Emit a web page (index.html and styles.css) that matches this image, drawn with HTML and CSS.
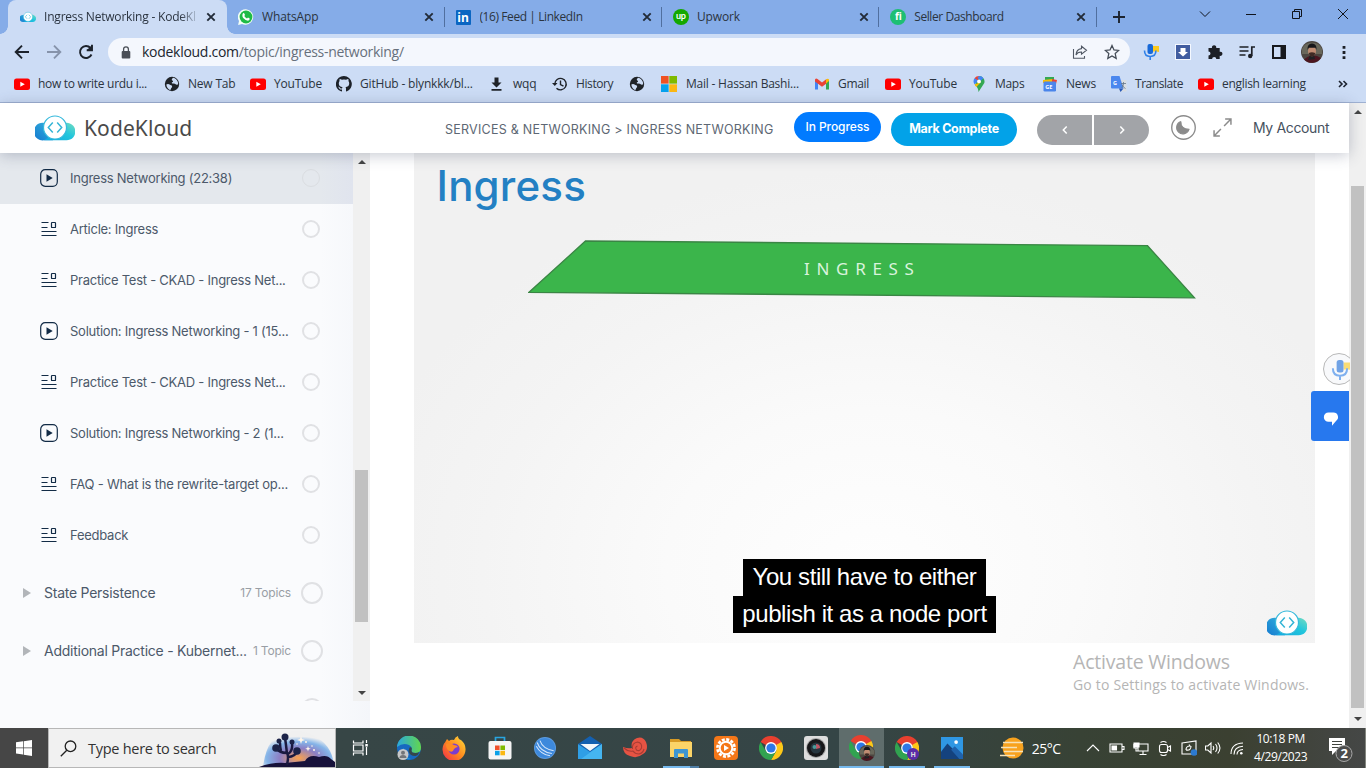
FILE: index.html
```html
<!DOCTYPE html>
<html lang="en">
<head>
<meta charset="utf-8">
<title>Ingress Networking - KodeKloud</title>
<link rel="stylesheet" href="styles.css">
</head>
<body>
<svg class="defs" width="0" height="0" aria-hidden="true">
  <defs>
    <linearGradient id="cloudL" x1="0" x2="1" y1="1" y2="0"><stop offset="0" stop-color="#1479d0"/><stop offset="1" stop-color="#35b4dc"/></linearGradient>
    <linearGradient id="cloudR" x1="0" x2="1" y1="1" y2="0"><stop offset="0" stop-color="#12a8e0"/><stop offset=".55" stop-color="#22c6dc"/><stop offset="1" stop-color="#74dcc0"/></linearGradient>
    <linearGradient id="edgeA" x1="0" x2="1"><stop offset="0" stop-color="#2aa8dc"/><stop offset="1" stop-color="#62d64e"/></linearGradient>
    <linearGradient id="foxA" x1="1" x2="0" y1="0" y2="1"><stop offset="0" stop-color="#ffe03c"/><stop offset=".5" stop-color="#ff8a1e"/><stop offset="1" stop-color="#f0264e"/></linearGradient>
    <radialGradient id="glow" cx=".5" cy=".75" r=".6"><stop offset="0" stop-color="#fba24e"/><stop offset=".45" stop-color="#8d7fc4"/><stop offset=".75" stop-color="#84b4e8"/><stop offset="1" stop-color="#f0f0f0"/></radialGradient>
  </defs>
  <symbol id="cloud" viewBox="0 0 40 26">
    <path d="M9 25.300A8.800 8.800 0 1 1 12 9l6 16.300z" fill="url(#cloudL)"/>
    <path d="M27 9a8.800 8.800 0 1 1 4 16.300H9l12-8z" fill="url(#cloudR)"/>
    <circle cx="20" cy="12.500" r="11.500" fill="#fff" stroke="#35b9dc" stroke-width="1.200"/>
    <path d="M17.800 7.500 13.300 12.500l4.500 5M22.200 7.500l4.500 5-4.500 5" fill="none" stroke="#35b5d6" stroke-width="1.500"/>
  </symbol>
  <symbol id="x" viewBox="0 0 10 10"><path d="M1.300 1.300l7.400 7.400M8.700 1.300 1.300 8.700" stroke="#222b38" stroke-width="1.900"/></symbol>
  <symbol id="yt" viewBox="0 0 16 16"><rect y="2.500" width="16" height="11.500" rx="2.500" fill="#f00"/><path d="M6.300 5.700v5l4.500-2.500z" fill="#fff"/></symbol>
  <symbol id="globe" viewBox="0 0 16 16"><circle cx="8" cy="8" r="7.200" fill="#1f2328"/><path d="M2.300 8.500q2-1 4 .5l1.500.5q1 1.500-.5 2.500l-1 2.200q-3.500-1.500-4-5.700M9 1.800q-2 1.500-1 2.500 1.500.5 1 1.500-2 .5-1 1.800 3-.5 4 1 1.500.3 2.200-.3-.2-4.500-4-6.200z" fill="#ccdcf5"/></symbol>
  <symbol id="chrome" viewBox="0 0 24 24"><path d="M12 12 1.600 6A12 12 0 0 1 22.400 6z" fill="#e8402f"/><path d="M22.400 6A12 12 0 0 1 12 24l5.200-9V6z" fill="#fdc818"/><path d="M1.600 6A12 12 0 0 0 12 24l5.200-9-10.400 0z" fill="#31a350"/><path d="M10 6h12.400L17 9z" fill="#e8402f"/><circle cx="12" cy="12" r="5.900" fill="#fff"/><circle cx="12" cy="12" r="4.600" fill="#2f78e6"/></symbol>
  <symbol id="face" viewBox="0 0 22 22"><circle cx="11" cy="11" r="11" fill="#4c4640"/><path d="M1 8a11 11 0 0 1 20 0v5H1z" fill="#68675a"/><path d="M3 18.500q8-7 17-1.500a11 11 0 0 1-17 1.500" fill="#4c1620"/><path d="M7 19l2-5h4l1 4z" fill="#202124"/><ellipse cx="11" cy="10" rx="4" ry="5.300" fill="#c08c72"/><path d="M6.500 9Q6 2.500 11 2.500T15.500 9L14.500 6.800H7.800z" fill="#17171a"/><path d="M7.800 12q3-1.500 6.400 0-.5 3.500-3.200 3.500T7.800 12" fill="#3f2a24"/></symbol>
  <symbol id="play" viewBox="0 0 18 18"><rect x=".7" y=".7" width="16.600" height="16.600" rx="4.500" fill="none" stroke="#122b46" stroke-width="1.200"/><path d="M6.500 5.200v7.600l6.200-3.800z" fill="#122b46"/></symbol>
  <symbol id="list" viewBox="0 0 18 18"><path d="M1.500 2.500h7M1.500 7.500h6M1.500 11.500h15M1.500 15.500h15" stroke="#122b46" stroke-width="1.200"/><rect x="11.500" y="2.500" width="4" height="5" rx=".6" fill="none" stroke="#122b46" stroke-width="1.200"/></symbol>
  <symbol id="mic" viewBox="0 0 16 16"><path d="M10 2h6v6l-2.500-.5H10z" fill="#fbc91c"/><rect x="4.500" y="0" width="5.500" height="10" rx="2" fill="#1769d8"/><path d="M1.500 6.500q0 6 5.700 6t5.700-6M7.200 12.500V16" fill="none" stroke="#2f80e8" stroke-width="1.600"/></symbol>
</svg>

<div class="browser">
  <div class="tabs">
    <div class="tab active"><svg class="fav"><use href="#cloud"/></svg><span class="t fade">Ingress Networking - KodeKl</span><svg class="close"><use href="#x"/></svg></div>
    <div class="tab"><svg class="fav" viewBox="0 0 16 16"><path d="M8 .2A7.800 7.800 0 1 1 4 15L.1 15.900 1 12A7.800 7.800 0 0 1 8 .2" fill="#f3fff5"/><circle cx="8" cy="8" r="6.400" fill="#1fbb46"/><path d="M5 4.200q1-.8 1.600.8l.4 1-.7 1q1 1.800 2.700 2.500l1-.9 1.700.9q.2 2-1.700 2.300-2.500-.2-4.500-2.500T5 4.200" fill="#fff"/></svg><span class="t">WhatsApp</span><svg class="close"><use href="#x"/></svg><i class="sep"></i></div>
    <div class="tab"><span class="fav li">in</span><span class="t tight">(16) Feed | LinkedIn</span><svg class="close"><use href="#x"/></svg><i class="sep"></i></div>
    <div class="tab"><span class="fav up">up</span><span class="t">Upwork</span><svg class="close"><use href="#x"/></svg><i class="sep"></i></div>
    <div class="tab"><span class="fav fi">fi</span><span class="t sell">Seller Dashboard</span><svg class="close"><use href="#x"/></svg><i class="sep"></i></div>
    <svg class="plus" viewBox="0 0 12 12"><path d="M6 0v12M0 6h12" stroke="#1d2430" stroke-width="1.900"/></svg>
    <div class="winctl">
      <svg viewBox="0 0 12 12"><path d="M1 3.500l5 5 5-5" /></svg>
      <svg viewBox="0 0 12 12"><path d="M1 6.500h10"/></svg>
      <svg viewBox="0 0 12 12"><path d="M1.500 3.500h7v7h-7zM3.500 3.500v-2h7v7h-2"/></svg>
      <svg viewBox="0 0 12 12"><path d="M1 1l10 10M11 1 1 11"/></svg>
    </div>
  </div>
  <div class="toolbar">
    <svg class="nav" viewBox="0 0 16 16"><path d="M15 8H2M8 1.700 1.700 8 8 14.300" stroke="#1c222b"/></svg>
    <svg class="nav" viewBox="0 0 16 16"><path d="M1 8h13M8 1.700 14.300 8 8 14.300" stroke="#8693aa"/></svg>
    <svg class="nav" viewBox="0 0 16 16"><path d="M13.500 10.500A6 6 0 1 1 12.500 4M14 .8v5.400H8.700" stroke="#1c222b"/><path d="M14 1v5H9z" fill="#1c222b"/></svg>
    <div class="omni">
      <svg class="lock" viewBox="0 0 10 13"><rect x=".7" y="5" width="8.600" height="7.500" rx="1" fill="#4a4f57"/><path d="M2.600 5V3.300a2.400 2.400 0 0 1 4.800 0V5" fill="none" stroke="#4a4f57" stroke-width="1.300"/></svg>
      <span class="url"><b>kodekloud.com</b>/topic/ingress-networking/</span>
      <svg class="share" viewBox="0 0 16 16"><path d="M1.500 5v9.300h11V12M9.500 2.200l5 4-5 4V8q-4-.2-5.500 3 .3-5.800 5.500-6.400z" fill="none" stroke="#505864" stroke-width="1.100"/></svg>
      <svg class="star" viewBox="0 0 16 16"><path d="M8 1.500l2 4.400 4.700.5-3.500 3.200 1 4.800L8 12l-4.200 2.400 1-4.800L1.300 6.400 6 5.900z" fill="none" stroke="#454d58" stroke-width="1.300"/></svg>
    </div>
    <div class="ext">
      <svg viewBox="0 0 16 16"><use href="#mic"/></svg>
      <svg viewBox="0 0 16 16"><rect x=".5" y=".5" width="15" height="15" fill="#415da0" stroke="#f4f8ff"/><path d="M5.500 4h5v4H13l-5 4.500L3 8h2.500z" fill="#fff"/></svg>
      <svg viewBox="0 0 16 16"><path d="M1.500 4H5a2.200 2.200 0 1 1 4.200 0h3.500v3.800a2.100 2.100 0 1 1 0 4V15H9.300a2.100 2.100 0 0 0-4.200 0H1.500v-3.500a2 2 0 0 0 0-4z" fill="#1d2026"/></svg>
      <svg viewBox="0 0 16 16"><path d="M.5 3h9M.5 7h9M.5 11h6M12.800 12V3H16" fill="none" stroke="#1d2026" stroke-width="1.700"/><circle cx="11.200" cy="12" r="2.200" fill="#1d2026"/></svg>
      <svg viewBox="0 0 16 16"><path d="M1 1h14v14H1z" fill="#17191d"/><path d="M3 3h6.500v10H3z" fill="#ccdcf5"/></svg>
      <svg class="avatar"><use href="#face"/></svg>
      <svg class="dots" viewBox="0 0 4 16"><path d="M.5 1h3v3h-3zM.5 6.500h3v3h-3zM.5 12h3v3h-3z" fill="#1d2026"/></svg>
    </div>
  </div>
  <div class="bookmarks">
    <a class="bm w150"><svg><use href="#yt"/></svg>how to write urdu i...</a>
    <a class="bm w86"><svg><use href="#globe"/></svg>New Tab</a>
    <a class="bm w86"><svg><use href="#yt"/></svg>YouTube</a>
    <a class="bm w153"><svg viewBox="0 0 16 16"><path d="M8 0a8 8 0 0 0-2.600 15.600c.4 0 .6-.2.600-.5v-1.600c-2.200.4-2.700-.9-2.900-1.300-.6-1-.2-.8-.9-1.300 1.300-.3 1.800 1.300 2.500 1.500.6.200 1 0 1.400-.2 0-.5.300-.9.500-1.100-2-.3-3.800-1-3.800-3.900 0-.9.300-1.600.8-2.200-.2-.6-.2-1.300.1-2.100.8 0 1.500.4 2.200.9a8 8 0 0 1 4.200 0c.7-.5 1.400-.9 2.200-.9.300.8.300 1.500.1 2.100.5.600.8 1.300.8 2.200 0 2.900-1.800 3.600-3.800 3.900.4.300.6.800.6 1.600V15c0 .3.200.6.600.5A8 8 0 0 0 8 0" fill="#1c2129"/></svg>GitHub - blynkkk/bl...</a>
    <a class="bm w63"><svg viewBox="0 0 16 16"><path d="M5.500 1.500h4v5h3l-5 5-5-5h3zM2.500 13h10v1.800h-10z" fill="#1f2328"/></svg>wqq</a>
    <a class="bm w77"><svg viewBox="0 0 16 16"><path d="M2.800 8A5.700 5.700 0 1 1 4.500 12.200M8.500 4.500v4l3 1.700" fill="none" stroke="#1f2328" stroke-width="1.400"/><path d="M0 7h5.500L2.800 10z" fill="#1f2328"/></svg>History</a>
    <a class="bm w32"><svg><use href="#globe"/></svg></a>
    <a class="bm w152"><svg viewBox="0 0 16 16"><path d="M0 0h7.600v7.600H0z" fill="#f05223"/><path d="M8.300 0H16v7.600H8.300z" fill="#7fba00"/><path d="M0 8.300h7.600V16H0z" fill="#06a2ee"/><path d="M8.300 8.300H16V16H8.300z" fill="#fcb813"/></svg>Mail - Hassan Bashi...</a>
    <a class="bm w71"><svg viewBox="0 0 16 16"><path d="M1 13.500V4l3 2.500v7z" fill="#4285f4"/><path d="M12 13.500v-7L15 4v9.500z" fill="#34a853"/><path d="M1 5V3.500q1-1.700 2.500-.5L8 6.500 12.500 3v4.500L8 10.800 1 5.500" fill="#ea4335"/><path d="M12 7.500v-4Q14 1.800 15 3.500V5z" fill="#fbbc04"/></svg>Gmail</a>
    <a class="bm w86"><svg><use href="#yt"/></svg>YouTube</a>
    <a class="bm w71"><svg viewBox="0 0 16 16"><path d="M8 0a5.500 5.500 0 0 1 5.300 7L7.500 16Q7.500 12 4 9z" fill="#34a853"/><path d="M8 0a5.500 5.500 0 0 0-4.500 2.300L7 6z" fill="#ea4335"/><path d="M3.500 2.300Q1.500 5 3.500 8.500l4-4z" fill="#4285f4"/><path d="M3.500 8.500l1.800 2.600L10 6z" fill="#fbbc04"/><path d="M8 0q3 0 4.500 2.300L9.500 5 6.500 2z" fill="#4285f4"/><circle cx="8" cy="5.400" r="1.900" fill="#fff"/></svg>Maps</a>
    <a class="bm w69"><svg viewBox="0 0 16 16"><path d="M3 1h9v6H3z" fill="#34a853"/><path d="M1 4l10-1v4H1z" fill="#fbbc04"/><path d="M10 3l5 1-1 4h-4z" fill="#ea4335"/><rect x="1.500" y="5.500" width="12.500" height="10" rx="1.300" fill="#4b86ec"/><text x="3.200" y="13" class="g">GE</text></svg>News</a>
    <a class="bm w87"><svg viewBox="0 0 16 16"><path d="M6 4h9.500v11.500H9z" fill="#d9dde2"/><path d="M1 0h7.500l4 12.500H1Q0 12.500 0 11.500V1q0-1 1-1" fill="#4a87ee"/><path d="M8 12.500h4.500L9.500 16z" fill="#2859b8"/><text x="2" y="8.500" class="g">G</text><path d="M10 7.500h5M12.500 6v2q-.5 3-2 4M11 8.500q1 3 3.500 4" fill="none" stroke="#637689" stroke-width=".8"/></svg>Translate</a>
    <a class="bm w140"><svg><use href="#yt"/></svg>english learning</a>
    <svg class="more" viewBox="0 0 10 8"><path d="M1 1l3 3-3 3M5.500 1l3 3-3 3" fill="none" stroke="#1d2430" stroke-width="1.600"/></svg>
  </div>
</div>

<div class="page">
  <div class="view">
    <header class="head">
      <svg class="logo"><use href="#cloud"/></svg><span class="brand">KodeKloud</span>
      <span class="crumb">SERVICES &amp; NETWORKING &gt; INGRESS NETWORKING</span>
      <span class="status">In Progress</span>
      <span class="mark">Mark Complete</span>
      <div class="pager">
        <span><svg viewBox="0 0 6 8"><path d="M4.700 .5 1.300 4l3.400 3.500"/></svg></span>
        <span><svg viewBox="0 0 6 8"><path d="M1.300 .5l3.400 3.500-3.400 3.500"/></svg></span>
      </div>
      <svg class="moon" viewBox="0 0 24 24"><circle cx="12" cy="12" r="11.300" fill="none" stroke="#8b8b8b" stroke-width="1.300"/><path d="M9.500 6.200q-.4 7 7.800 7.600A6.100 6.100 0 1 1 9.500 6.200" fill="#8b8b8b" stroke="#8b8b8b"/></svg>
      <svg class="expand" viewBox="0 0 18 18"><path d="M10.500 7.500 17 1M11.500 1H17v5.500M7.500 10.500 1 17M1 11.500V17h5.500" fill="none" stroke="#8b8b8b" stroke-width="1.400"/></svg>
      <span class="acct">My Account</span>
    </header>
    <div class="cols">
      <aside class="side">
        <div class="scroll">
          <div class="list">
            <div class="it on"><svg><use href="#play"/></svg><span>Ingress Networking (22:38)</span><i></i></div>
            <div class="it"><svg><use href="#list"/></svg><span>Article: Ingress</span><i></i></div>
            <div class="it"><svg><use href="#list"/></svg><span>Practice Test - CKAD - Ingress Net...</span><i></i></div>
            <div class="it"><svg><use href="#play"/></svg><span>Solution: Ingress Networking - 1 (15...</span><i></i></div>
            <div class="it"><svg><use href="#list"/></svg><span>Practice Test - CKAD - Ingress Net...</span><i></i></div>
            <div class="it"><svg><use href="#play"/></svg><span>Solution: Ingress Networking - 2 (1...</span><i></i></div>
            <div class="it wide"><svg><use href="#list"/></svg><span>FAQ - What is the rewrite-target op...</span><i></i></div>
            <div class="it"><svg><use href="#list"/></svg><span>Feedback</span><i></i></div>
            <div class="sec first"><b></b><span>State Persistence</span><em>17 Topics</em><i></i></div>
            <div class="sec"><b></b><span>Additional Practice - Kubernet...</span><em>1 Topic</em><i></i></div>
            <div class="sec"><span></span><i></i></div>
          </div>
          <div class="bar sbar"><b class="a up-a"></b><div class="thumb"></div><b class="a dn-a"></b></div>
        </div>
      </aside>
      <main class="main">
        <div class="video">
          <div class="vt">Ingress</div>
          <div class="banner">
            <svg viewBox="0 0 668 60"><path d="M57.500 2 619.500 6.700 666.500 58.800 1 53.300z" fill="#3bb54b" stroke="#3a8544" stroke-width="1.300"/></svg>
            <span>INGRESS</span>
          </div>
          <div class="cap"><span class="c1">You still have to either</span><span class="c2">publish it as a node port</span></div>
          <svg class="wm"><use href="#cloud"/></svg>
        </div>
        <div class="activate"><p class="a1">Activate Windows</p><p class="a2">Go to Settings to activate Windows.</p></div>
      </main>
    </div>
    <div class="micfab"><svg><use href="#mic"/></svg></div>
    <div class="chat"><svg viewBox="0 0 16 14"><path d="M5.500 .5h5a4.600 4.600 0 0 1 2.500 8.400Q11.500 10.500 9 13.800V9.800H5.500a4.600 4.600 0 0 1 0-9.300" fill="#fff"/></svg></div>
  </div>
  <div class="bar pbar"><b class="a up-a"></b><div class="thumb"></div><b class="a dn-a"></b></div>
</div>

<footer class="task">
  <div class="start"><svg viewBox="0 0 16 16"><path d="M0 2.300 7 1.300v6.300H0zM7.700 1.200 16 0v7.600H7.700zM0 8.300h7v6.300l-7-1zM7.700 8.300H16V16l-8.300-1.200z" fill="#fff"/></svg></div>
  <div class="search">
    <svg class="mag" viewBox="0 0 17 17"><circle cx="10.500" cy="6.300" r="5.300" fill="none" stroke="#222" stroke-width="1.300"/><path d="M6.800 10.200.8 16.200" stroke="#222" stroke-width="1.300"/></svg>
    <span>Type here to search</span>
    <svg class="art" viewBox="0 0 76 38"><path d="M4 38Q8 6 28 3q14-3 26 3 20 10 21 32z" fill="url(#glow)"/><path d="M0 38q14-5 26-4 10-1 20-2 4-7 14-4 8-3 12 2l4 3v5z" fill="#17123a"/><path d="M28 36q2-9 0-12-8 0-12-6M28 25q-1-10-2-16M29 25q5-3 4-11M29 28q7 0 10-7M22 22q-1-4-1-8" fill="none" stroke="#1b1a40" stroke-width="2.500"/><g fill="#1c2348"><circle cx="26" cy="8" r="3.500"/><circle cx="17" cy="19" r="3.800"/><circle cx="38" cy="22" r="3.800"/><circle cx="33" cy="13" r="2.500"/><circle cx="20" cy="12" r="2.500"/></g><g fill="#fff6ea"><path d="M42 7l1 3 3 1-3 1-1 3-1-3-3-1 3-1zM49 17l.7 2 2 .7-2 .7-.7 2-.7-2-2-.7 2-.7z"/><circle cx="47" cy="13" r="1"/><circle cx="55" cy="21" r="1"/><circle cx="53" cy="17" r=".8"/><circle cx="60" cy="24" r=".8"/><circle cx="38" cy="15" r=".8"/></g></svg>
  </div>
  <div class="tv"><svg viewBox="0 0 18 18"><path d="M1.500 1.500V4H11V1.500M1.500 6h9.500v6H1.500zM1.500 16.500V14H11v2.500M14.500 1v3M14.500 8v8" fill="none" stroke="#fff" stroke-width="1.200"/><path d="M13.300 5h2.500v2.500h-2.500z" fill="#fff"/></svg></div>
  <div class="apps">
    <div><svg viewBox="0 0 24 24"><circle cx="12" cy="12" r="12" fill="#1769c0"/><path d="M0 11A12 12 0 0 1 24 12q0 5-6 5-4 0-3.500-2.500Q16 11 12 9 6 6 0 11" fill="url(#edgeA)"/><path d="M12.500 11.500q3-1 2 3 0 2.500 4 2.500 2 0 4-1-1 3-4 4-6 0-7-5z" fill="#35474a"/><path d="M7 12q-1 9 7 11-7 1-10-4 0-5 3-7" fill="#1d9bdc"/><circle cx="6" cy="18.500" r="5.500" fill="#c6c7c8"/><circle cx="6" cy="16.800" r="2" fill="#737578"/><path d="M2.500 22q0-3 3.500-3t3.500 3z" fill="#737578"/></svg></div>
    <div><svg viewBox="0 0 24 24"><path d="M5 3l2 2q2-2 5-1 1-3 4-4 0 3 3 4 5 4 4.500 10A11.500 11.500 0 0 1 .5 13Q1 8 3 6.500z" fill="url(#foxA)"/><circle cx="12" cy="13" r="5.600" fill="#7a3cd0"/><path d="M4 8q4-2 8 1 3 0 4 2-2 0-4 2-1 4-5 2-3-2-3-7" fill="#ff8b24"/></svg></div>
    <div><svg viewBox="0 0 24 24"><path d="M7.500 6V1.500h9V6" fill="none" stroke="#28a5e0" stroke-width="1.700"/><rect x=".5" y="5" width="23" height="18.500" rx="2" fill="#f5f5f5"/><path d="M7 9.500h4.600V14H7z" fill="#f0502a"/><path d="M12.400 9.500H17V14h-4.600z" fill="#7fba00"/><path d="M7 14.800h4.600v4.500H7z" fill="#0aa1e8"/><path d="M12.400 14.800H17v4.500h-4.600z" fill="#fbb813"/></svg></div>
    <div><svg class="s22" viewBox="0 0 24 24"><circle cx="12" cy="12" r="12" fill="#5b9be0"/><circle cx="12" cy="12" r="11" fill="#3d89dc"/><path d="M3.500 6q3 10 16 12M6.500 4q3 9 15 11M2.500 10q5 9 15 10.500" fill="none" stroke="#d4e6fb" stroke-width="1.100"/></svg></div>
    <div><svg viewBox="0 0 24 24"><path d="M0 8 12 0l12 8-12 9z" fill="#1460b0"/><path d="M0 8l12 8 12-8v15H0z" fill="#2f9fe6"/><path d="M2.500 8h19L12 15z" fill="#f4f7fa"/><path d="M24 8v15H3z" fill="#45b5f0"/></svg></div>
    <div><svg viewBox="0 0 24 24"><path d="M0 11q5 2 9 1-2-7 5-10 6-2 9 4 3 8-3 12-6 5-13 2Q0 18 0 11" fill="#e65343"/><path d="M9.500 13q-1-6 5-7 5 1 4 6-2 4-5 2-2-3 1-4M1 12q4 4 9 3 2 3 6 3 4-1 5-5" fill="none" stroke="#a83c34" stroke-width="1.100"/></svg></div>
    <div class="run fold"><svg viewBox="0 0 24 24"><path d="M1 3h9l2 2h10v15H1z" fill="#d89b25"/><path d="M1 6h22v15H1z" fill="#fbd468"/><path d="M5 22v-8q0-1 1-1h12q1 0 1 1v8h-4v-4.500H9V22z" fill="#3e96d2"/></svg></div>
    <div><svg viewBox="0 0 24 24"><rect width="24" height="24" rx="4" fill="#f57718"/><circle cx="12" cy="12" r="8.600" fill="none" stroke="#fff" stroke-width="2.600" stroke-dasharray="3 1.500"/><circle cx="12" cy="12" r="6.300" fill="none" stroke="#fff" stroke-width="2"/><path d="M10 9v6l5-3z" fill="#fff"/></svg></div>
    <div><svg><use href="#chrome"/></svg></div>
    <div><svg viewBox="0 0 24 24"><rect width="24" height="24" rx="3" fill="#dedede"/><circle cx="12" cy="12" r="10" fill="#a7a7a7"/><circle cx="12" cy="12" r="9" fill="#161719"/><circle cx="12" cy="12" r="5.500" fill="#26353e"/><path d="M12 8a4 4 0 0 1 4 4l-4 1z" fill="#c25563"/><circle cx="10.500" cy="11" r="2" fill="#4a9a9a"/></svg></div>
    <div class="run cur"><svg viewBox="0 0 26 26"><use href="#chrome" width="24" height="24"/><use href="#face" x="10" y="10" width="16" height="16"/></svg></div>
    <div class="run"><svg viewBox="0 0 24 24"><use href="#chrome" width="24" height="24"/><circle cx="18" cy="18" r="6" fill="#5a2ca8"/><text x="15.400" y="21" class="hh">H</text></svg></div>
    <div class="run"><svg class="s22" viewBox="0 0 24 24"><path d="M0 0h24v24H0z" fill="#2f97e4"/><path d="M0 16 7 7l17 17H0z" fill="#14427e"/><path d="M11 14l4-4 9 9v5h-4z" fill="#1f62ac"/><circle cx="16.500" cy="5.500" r="2" fill="#fff"/></svg></div>
  </div>
  <div class="tray">
    <svg class="wx" viewBox="0 0 24 22"><circle cx="13" cy="11" r="10.500" fill="#f8a21e"/><path d="M3 5.500h20M1 10.500h16M4 14.500h19M0 18.500h15" stroke="#f6e2b8" stroke-width="1.700"/></svg>
    <span class="temp">25°C</span>
    <svg viewBox="0 0 16 16"><path d="M2 11l6-6 6 6"/></svg>
    <svg viewBox="0 0 16 16"><path d="M1 4h12v8H1zM13.500 6.500h1.500v3h-1.500"/><path d="M3 6h4.500v4H3z" fill="#fff"/></svg>
    <svg viewBox="0 0 16 16"><path d="M5 4h10v7H5zM10 11v3M6.500 14.500h7M1 4.500h4v3.500H1zM3 8v3h2"/><path d="M1 3h5v4H1z" fill="#fff"/></svg>
    <svg viewBox="0 0 16 16"><rect x="2.500" y="4.500" width="8" height="8" rx="2"/><path d="M10.500 7.500l3-1.500v5l-3-1.500M3.500 2.500q3-2 6 0M3.500 14.500q3 2 6 0"/></svg>
    <svg viewBox="0 0 16 16"><path d="M1 3l14-2v13H1zM5 10q0-4 4-4l-1-1.500M10 6q0 5-5 4"/><circle cx="13" cy="12.500" r="3.300" fill="#2c7ad0" stroke="none"/></svg>
    <svg viewBox="0 0 16 16"><path d="M.5 6h2.300L6 3v10L2.800 10H.5zM8 6q1.500 2 0 4M10.500 4q3 4 0 8M12.700 2.500q4.500 5.500 0 11"/></svg>
    <svg viewBox="0 0 16 16"><path d="M2 14Q2 3.500 14 3M5 14.500Q5 7 14 6.300M8 14.500Q8 10 14 9.500"/><circle cx="12.300" cy="13.200" r="1.300" fill="#fff" stroke="none"/></svg>
    <div class="clock"><span>10:18 PM</span><span>4/29/2023</span></div>
    <svg class="note" viewBox="0 0 26 26"><path d="M1 2h16v13H8l-4 4v-4H1z" fill="#fff" stroke="none"/><path d="M4 5.500h10M4 8.500h10M4 11.500h7" stroke="#40443e"/><circle cx="16" cy="17.500" r="8" fill="#4b4c4b" stroke="#a8a8a8" stroke-width="1"/><text x="12.500" y="22" class="two">2</text></svg>
    <i class="peek"></i>
  </div>
</footer>
</body>
</html>
```
FILE: styles.css
```css
* { box-sizing: border-box; }
body { margin: 0; width: 1366px; height: 768px; overflow: hidden; font-family: "Open Sans", "Noto Sans", sans-serif; background: #fff; display: flex; flex-direction: column; }
svg { flex: none; display: block; }
i, em, b { font-style: normal; font-weight: 400; }
.defs { position: absolute; }

/* browser chrome */
.browser { height: 103px; flex: none; background: #ccdcf5; border-bottom: 1px solid #9fb1d2; font-size: 12px; color: #2b3440; }
.tabs { height: 34px; background: #85ace8; display: flex; padding-left: 8px; }
.tab { width: 217.400px; flex: none; display: flex; align-items: center; padding: 0 0 0 12px; position: relative; letter-spacing: -.12px; }
.tab.active { background: #ccdcf5; border-radius: 8px 8px 0 0; width: 219px; margin-right: -.900px; }
.tab.active::before, .tab.active::after { content: ""; position: absolute; bottom: 0; width: 8px; height: 8px; }
.tab.active::before { left: -8px; background: radial-gradient(circle at 0 0, #85ace8 7.500px, #ccdcf5 8px); }
.tab.active::after { right: -8px; background: radial-gradient(circle at 100% 0, #85ace8 7.500px, #ccdcf5 8px); }
.fav { width: 16px; height: 16px; margin-right: 8px; flex: none; }
.li { background: #0b66c2; color: #fff; font: 700 12px/15px "Open Sans", sans-serif; text-align: center; border-radius: 1px; height: 15px; width: 15px; margin-right: 9px; }
.up { background: #14a800; color: #fff; font: 700 9px/13px Lato, sans-serif; text-align: center; border-radius: 50%; }
.fi { background: #1dbf73; color: #fff; font: 700 10px/15px "Open Sans", sans-serif; text-align: center; border-radius: 50%; }
.t { width: 162px; white-space: nowrap; overflow: hidden; line-height: 18px; }
.tight { letter-spacing: -.42px; }
.sell { letter-spacing: -.2px; }
.fade { width: 156px; margin-right: 6px; letter-spacing: -.2px; -webkit-mask-image: linear-gradient(90deg, #000 136px, transparent 156px); mask-image: linear-gradient(90deg, #000 136px, transparent 156px); }
.sell { letter-spacing: -.42px; }
.close { width: 10px; height: 10px; }
.sep { position: absolute; right: -1px; top: 7px; width: 1px; height: 20px; background: #506f9f; }
.plus { width: 12px; height: 12px; margin: 11px 0 0 17.500px; }
.winctl { display: flex; gap: 34px; margin-left: auto; padding: 8px 17px 0 0; }
.winctl svg { width: 12px; height: 12px; fill: none; stroke: #10141c; stroke-width: 1; }
.toolbar { height: 36px; display: flex; align-items: center; padding-left: 14px; }
.nav { width: 16px; height: 16px; margin-right: 16px; fill: none; stroke-width: 1.900; }
.omni { width: 1022px; height: 28px; margin-left: -2px; border-radius: 14px; background: #f4f7fd; display: flex; align-items: center; padding: 0 10px 0 13px; }
.lock { width: 10px; height: 13px; }
.url { font-size: 14px; letter-spacing: -.28px; color: #67707c; margin-left: 11px; flex: 1; line-height: 20px; }
.url b { color: #20262f; }
.share { width: 16px; height: 16px; margin-right: 16px; }
.star { width: 16px; height: 16px; }
.ext { display: flex; align-items: center; padding-left: 13px; gap: 16px; }
.ext svg { width: 16px; height: 16px; }
.ext .avatar { width: 22px; height: 22px; margin-left: -2px; }
.ext .dots { width: 4px; margin-left: 3px; height: 15px; }
.bookmarks { height: 32px; display: flex; align-items: center; padding: 0 0 4px 14px; letter-spacing: -.22px; }
.bm { display: flex; align-items: center; gap: 8px; white-space: nowrap; flex: none; line-height: 18px; }
.bm svg { width: 16px; height: 16px; }
.w150 { width: 150px; letter-spacing: -.3px; } .w86 { width: 86px; letter-spacing: -.2px; } .w153 { width: 153px; letter-spacing: -.18px; } .w63 { width: 63px; } .w77 { width: 77px; letter-spacing: -.4px; } .w32 { width: 32px; }
.w152 { width: 153px; gap: 9px; } .w71 { width: 71px; letter-spacing: -.3px; } .w69 { width: 69px; } .w87 { width: 87px; letter-spacing: -.45px; } .w140 { width: 140px; letter-spacing: -.3px; }
.more { width: 10px; height: 8px; }
.g { font: 700 5.500px "Open Sans", sans-serif; fill: #fff; letter-spacing: 0; }

/* page */
.page { height: 625px; flex: none; display: flex; }
.view { width: 1349px; position: relative; display: flex; flex-direction: column; }
.head { height: 50px; flex: none; background: #fff; display: flex; align-items: center; box-shadow: 0 2px 14px rgba(60, 70, 100, .3); position: relative; z-index: 2; font-family: Inter, sans-serif; padding-left: 35px; }
.head > * { flex: none; }
.logo { width: 40px; height: 26px; }
.brand { width: 370px; padding-left: 9px; font: 400 21px/28px "Noto Sans", sans-serif; letter-spacing: .1px; color: #4a4a4a; }
.crumb { width: 349px; font-size: 12.500px; letter-spacing: .24px; color: #5d6773; padding-top: 3px; white-space: nowrap; }
.status { width: 87px; height: 30px; border-radius: 15px; background: #017bff; color: #fff; font-size: 12px; font-weight: 500; line-height: 30px; text-align: center; margin-bottom: 3px; letter-spacing: -.1px; }
.mark { width: 126px; height: 33px; margin: 2px 0 0 10px; border-radius: 17px; background: #02a2e8; color: #fff; font-size: 12.500px; font-weight: 700; line-height: 32px; text-align: center; letter-spacing: -.28px; }
.pager { display: flex; gap: 2px; margin: 4px 0 0 20px; }
.pager span { width: 55px; height: 30px; background: #a2a4a8; display: flex; align-items: center; justify-content: center; }
.pager span:first-child { border-radius: 15px 0 0 15px; }
.pager span:last-child { border-radius: 0 15px 15px 0; }
.pager svg { width: 6px; height: 8px; fill: none; stroke: #fff; stroke-width: 1.500; }
.moon { width: 25px; height: 25px; margin: 0 17px 2px 22px; }
.expand { width: 19px; height: 19px; margin-right: 21px; margin-bottom: 1px; }
.acct { font-size: 14px; letter-spacing: -.36px; color: #46515e; white-space: nowrap; margin-top: -1px; }
.cols { flex: 1; display: flex; height: 575px; }
.side { width: 370px; flex: none; background: linear-gradient(90deg, #fafbfd 320px, #f4f6fa 370px); }
.scroll { height: 548px; display: flex; overflow: hidden; }
.list { width: 353px; font-family: Inter, sans-serif; color: #4c596a; }
.it { height: 51px; display: flex; align-items: center; padding: 0 33px 0 40px; font-size: 13px; letter-spacing: -.25px; }
.it.wide { letter-spacing: -.21px; }
.it.on { background: linear-gradient(90deg, #e4e8ed 320px, #e0e4ee); }
.it svg { width: 18px; height: 18px; margin: -1px 12px 0 0; }
.it span { width: 231px; white-space: nowrap; padding-bottom: 2px; }
.it i, .sec i { width: 18px; height: 18px; border: 2px solid #e0e1e4; border-radius: 50%; flex: none; margin: -1px 0 0 1px; }
.it.on i { border-color: #dadde1; border-width: 1px; }
.sec { height: 58px; display: flex; align-items: center; padding: 0 30px 0 23px; font-size: 14px; letter-spacing: -.25px; }
.sec.first { margin-top: 3px; }
.sec b { border-left: 8px solid #b2b5b9; border-top: 5px solid transparent; border-bottom: 5px solid transparent; margin-right: 13px; }
.sec span { flex: 1; white-space: nowrap; padding-bottom: 1px; }
.sec em { font-size: 12px; color: #999ea5; margin-right: 9px; letter-spacing: -.2px; white-space: nowrap; padding-bottom: 2px; }
.sec i { width: 22px; height: 22px; margin-top: 0; }
.bar { width: 17px; background: #f0f0f0; display: flex; flex-direction: column; align-items: center; }
.thumb { width: 13px; background: #c1c1c1; }
.a { width: 0; height: 0; border-left: 4px solid transparent; border-right: 4px solid transparent; }
.up-a { border-bottom: 4px solid #444; }
.dn-a { border-top: 4px solid #444; }
.sbar .up-a { margin-top: 7px; }
.sbar .thumb { height: 152px; margin-top: 306px; }
.sbar .dn-a { margin-top: 69px; }
.pbar .up-a { margin-top: 7px; }
.pbar .thumb { height: 522px; margin-top: 72px; }
.pbar .dn-a { margin-top: 9px; }
.main { flex: 1; background: #fff; }
.video { width: 901px; height: 490px; margin-left: 44px; position: relative; background: radial-gradient(ellipse 520px 400px at 51% 85%, #fefefe 0, #fafafa 40%, #f4f4f4 75%, #f1f1f1 100%); }
.vt { padding: 8px 0 0 22.500px; height: 86px; font: 500 42px/50px Inter, sans-serif; letter-spacing: .2px; color: #2380c3; }
.banner { width: 668px; height: 60px; margin-left: 114px; display: grid; }
.banner svg, .banner span { grid-area: 1 / 1; }
.banner svg { width: 668px; height: 60px; }
.banner span { font: 400 17px/60px "Noto Sans", sans-serif; letter-spacing: 6.700px; color: #d9f3dc; padding-left: 276px; }
.cap { margin-top: 260px; display: flex; flex-direction: column; align-items: center; font: 24px/35px "Liberation Sans", sans-serif; color: #fff; }
.cap span { background: #000; text-align: center; height: 37px; white-space: nowrap; letter-spacing: -.42px; }
.c1 { width: 243px; }
.c2 { width: 263px; }
.wm { position: absolute; right: 8px; bottom: 7px; width: 40px; height: 26px; }
.activate { color: #b5b5b5; padding: 6px 0 0 703px; }
.activate p { margin: 0; white-space: nowrap; }
.a1 { font-size: 19.500px; line-height: 26px; letter-spacing: -.2px; }
.a2 { font-size: 14px; line-height: 19px; letter-spacing: .19px; }
.micfab { position: absolute; right: -6px; top: 250px; width: 32px; height: 32px; border: 1px solid #b8b8b8; border-radius: 50%; background: #f8f9fb; padding: 6px 0 0 7px; clip-path: inset(0 5px 0 0); }
.micfab svg { width: 20px; height: 20px; opacity: .6; }
.chat { position: absolute; right: 0; top: 288px; width: 38px; height: 50px; border-radius: 3px 0 0 3px; background: #2778ee; padding: 21px 0 0 12px; }
.chat svg { width: 16px; height: 14px; }

/* taskbar */
.task { height: 40px; flex: none; display: flex; background: linear-gradient(90deg, #464646 0, #464646 48px, #374646 336px, #354546 850px, #384235 1080px, #3b4031 1230px, #454746 1366px); color: #fff; }
.task > div { flex: none; }
.start { width: 48px; padding: 12px 0 0 16px; }
.start svg { width: 16px; height: 16px; }
.search { width: 288px; background: #f1f1f1; border: 1px solid #b7b7b7; display: flex; align-items: center; color: #333; padding-left: 11px; }
.mag { width: 17px; height: 17px; }
.search span { font-size: 14.500px; letter-spacing: -.27px; margin-left: 11px; flex: 1; white-space: nowrap; }
.art { width: 76px; height: 38px; }
.tv { width: 50.400px; padding: 11px 0 0 16px; }
.tv svg { width: 18px; height: 18px; }
.apps { display: flex; }
.apps div { width: 45.250px; flex: none; display: flex; align-items: center; justify-content: center; }
.apps svg { width: 24px; height: 24px; }
.apps .s22 { width: 22px; height: 22px; }
.run { background: linear-gradient(#76b9ed, #76b9ed) center bottom / 36px 2px no-repeat; }
.run.fold { background-image: linear-gradient(90deg, #76b9ed 27px, #4f7ea5 27px); }
.run.cur { background-color: #5f6d6c; background-size: 45px 2px; }
.apps .cur svg { width: 26px; height: 26px; }
.hh { font: 700 7px "Open Sans", sans-serif; fill: #ddd; }
.task .tray { flex: 1; display: flex; align-items: center; padding-left: 25px; }
.tray > * { flex: none; }
.tray svg { width: 16px; height: 16px; margin-right: 8px; fill: none; stroke: #fff; stroke-width: 1.100; }
.tray .wx { width: 24px; height: 22px; margin-right: 8px; stroke: none; }
.temp { width: 53px; font-size: 14px; letter-spacing: -.5px; }
.clock { width: 60px; margin-left: -2px; display: flex; flex-direction: column; font-size: 12px; line-height: 18px; text-align: center; letter-spacing: -.4px; white-space: nowrap; }
.tray .note { width: 26px; height: 26px; margin: 2px 0 0 17px; }
.two { font: 700 13px "Open Sans", sans-serif; fill: #fff; stroke: none; }
.peek { width: 1px; height: 40px; background: #83867f; margin-left: 11px; }
```
